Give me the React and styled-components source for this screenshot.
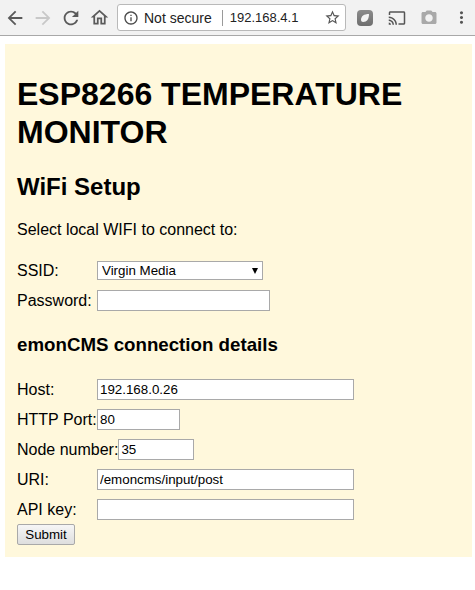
import styled, { createGlobalStyle } from 'styled-components'

const GlobalStyle = createGlobalStyle`
  html, body { margin: 0; padding: 0; background: #fff; }
  body { font-family: "Liberation Sans", Arial, sans-serif; }
`

const ICONS = {
  back: 'M20 11H7.83l5.59-5.59L12 4l-8 8 8 8 1.41-1.41L7.83 13H20v-2z',
  forward: 'M12 4l-1.41 1.41L16.17 11H4v2h12.17l-5.58 5.59L12 20l8-8z',
  reload: 'M17.65 6.35C16.2 4.9 14.21 4 12 4c-4.42 0-7.99 3.58-7.99 8s3.57 8 7.99 8c3.73 0 6.84-2.55 7.73-6h-2.08c-.82 2.33-3.04 4-5.65 4-3.31 0-6-2.69-6-6s2.69-6 6-6c1.66 0 3.14.69 4.22 1.78L13 11h7V4l-2.35 2.35z',
  home: 'M12 5.69l5 4.5V18h-2v-6H9v6H7v-7.81l5-4.5M12 3L2 12h3v8h6v-6h2v6h6v-8h3L12 3z',
  info: 'M11 7h2v2h-2zm0 4h2v6h-2zm1-9C6.48 2 2 6.48 2 12s4.48 10 10 10 10-4.48 10-10S17.52 2 12 2zm0 18c-4.41 0-8-3.59-8-8s3.59-8 8-8 8 3.59 8 8-3.59 8-8 8z',
  star: 'M22 9.24l-7.19-.62L12 2 9.19 8.63 2 9.24l5.46 4.73L5.82 21 12 17.27 18.18 21l-1.63-7.03L22 9.24zM12 15.4l-3.76 2.27 1-4.28-3.32-2.88 4.38-.38L12 6.1l1.71 4.04 4.38.38-3.32 2.88 1 4.28L12 15.4z',
  cast: 'M21 3H3c-1.1 0-2 .9-2 2v3h2V5h18v14h-7v2h7c1.1 0 2-.9 2-2V5c0-1.1-.9-2-2-2zM1 18v3h3c0-1.66-1.34-3-3-3zm0-4v2c2.76 0 5 2.24 5 5h2c0-3.87-3.13-7-7-7zm0-4v2c4.97 0 9 4.03 9 9h2c0-6.08-4.93-11-11-11z',
  camera: 'M9 2L7.17 4H4c-1.1 0-2 .9-2 2v12c0 1.1.9 2 2 2h16c1.1 0 2-.9 2-2V6c0-1.1-.9-2-2-2h-3.17L15 2H9zm3 15c-2.76 0-5-2.24-5-5s2.24-5 5-5 5 2.24 5 5-2.24 5-5 5z',
  dots: 'M12 8c1.1 0 2-.9 2-2s-.9-2-2-2-2 .9-2 2 .9 2 2 2zm0 2c-1.1 0-2 .9-2 2s.9 2 2 2 2-.9 2-2-.9-2-2-2zm0 6c-1.1 0-2 .9-2 2s.9 2 2 2 2-.9 2-2-.9-2-2-2z'
}

function Icon ({ name, size = 22, color = '#5a5a5a' }) {
  return (
    <svg width={size} height={size} viewBox='0 0 24 24' fill={color}>
      <path d={ICONS[name]} />
    </svg>
  )
}

export default function App () {
  return (
    <>
      <GlobalStyle />
      <Toolbar>
        <NavButtons>
          <IconSlot><Icon name='back' /></IconSlot>
          <IconSlot><Icon name='forward' color='#c8c8c8' /></IconSlot>
          <IconSlot><Icon name='reload' /></IconSlot>
          <IconSlot><Icon name='home' size={21} /></IconSlot>
        </NavButtons>
        <Omnibox>
          <Icon name='info' size={16} color='#4a4a4a' />
          <SecurityText>Not secure</SecurityText>
          <Divider />
          <Address>192.168.4.1</Address>
          <Icon name='star' size={17} color='#555' />
        </Omnibox>
        <ExtButtons>
          <ExtSlot>
            <ExtBadge>
              <svg width='10' height='10' viewBox='0 0 10 10'>
                <path d='M1 7C1 3 4 1 9 1 9 6 7 9 3 9 2 9 1 8 1 7z' fill='#f4f4f4' />
              </svg>
            </ExtBadge>
          </ExtSlot>
          <ExtSlot><Icon name='cast' size={18} color='#555' /></ExtSlot>
          <ExtSlot><Icon name='camera' size={18} color='#a9a9a9' /></ExtSlot>
          <ExtSlot><Icon name='dots' size={19} color='#555' /></ExtSlot>
        </ExtButtons>
      </Toolbar>

      <Page>
        <Panel>
          <Title>ESP8266 TEMPERATURE MONITOR</Title>
          <SubTitle>WiFi Setup</SubTitle>
          <Intro>Select local WIFI to connect to:</Intro>

          <Form onSubmit={e => e.preventDefault()}>
            <Row $first>
              <Label>SSID:</Label>
              <SelectWrap>
                <Select defaultValue='Virgin Media'>
                  <option>Virgin Media</option>
                </Select>
              </SelectWrap>
            </Row>
            <Row>
              <Label>Password:</Label>
              <Input type='password' $width={173} />
            </Row>

            <Section>emonCMS connection details</Section>

            <Row>
              <Label>Host:</Label>
              <Input defaultValue='192.168.0.26' $width={257} />
            </Row>
            <Row>
              <Label>HTTP Port:</Label>
              <Input defaultValue='80' $width={83} />
            </Row>
            <Row>
              <Label>Node number:</Label>
              <Input defaultValue='35' $width={76} />
            </Row>
            <Row>
              <Label>URI:</Label>
              <Input defaultValue='/emoncms/input/post' $width={257} />
            </Row>
            <Row>
              <Label>API key:</Label>
              <Input $width={257} />
            </Row>
            <SubmitButton type='submit'>Submit</SubmitButton>
          </Form>
        </Panel>
      </Page>
    </>
  )
}

const Toolbar = styled.div`
  display: flex;
  align-items: center;
  height: 35px;
  overflow: hidden;
  background: #f2f2f2;
  border-bottom: 1px solid #a8a8a8;
`

const NavButtons = styled.div`
  display: flex;
  flex-shrink: 0;
  align-items: center;
  box-sizing: border-box;
  width: 117px;
  padding-left: 1px;
`

const IconSlot = styled.div`
  display: flex;
  align-items: center;
  justify-content: center;
  width: 28px;
  height: 28px;
`

const Omnibox = styled.div`
  display: flex;
  flex-shrink: 0;
  align-items: center;
  box-sizing: border-box;
  width: 229px;
  height: 27px;
  padding: 0 4px 0 5px;
  background: #fff;
  border: 1px solid #b9b9b9;
  border-radius: 3px;
  font-size: 14px;
  color: #222;
`

const SecurityText = styled.span`
  margin-left: 5px;
`

const Divider = styled.span`
  width: 1px;
  height: 16px;
  margin: 0 7px 0 10px;
  background: #9a9a9a;
`

const Address = styled.span`
  flex: 1;
  font-size: 13px;
`

const ExtButtons = styled.div`
  display: flex;
  flex-shrink: 0;
  align-items: center;
  margin-left: 3px;
`

const ExtSlot = styled.div`
  display: flex;
  align-items: center;
  justify-content: center;
  width: 32px;
  height: 28px;
`

const ExtBadge = styled.div`
  display: flex;
  align-items: center;
  justify-content: center;
  width: 16px;
  height: 16px;
  background: linear-gradient(#8c8c8c, #6e6e6e);
  border-radius: 4px;
`

const Page = styled.div`
  padding: 8px 3px 33px 5px;
`

const Panel = styled.div`
  padding: 1px 12px 12px;
  background: #fff8dc;
  color: #000;
  font-size: 16px;
`

const Title = styled.h1`
  margin: 30px 0 22px;
  font-size: 32px;
  line-height: 38px;
  font-weight: bold;
`

const SubTitle = styled.h2`
  margin: 0 0 20px;
  font-size: 24px;
  line-height: 28px;
  font-weight: bold;
`

const Intro = styled.p`
  margin: 0 0 21px;
  line-height: 18px;
`

const Form = styled.form`
  margin: 0;
`

const Row = styled.div`
  display: flex;
  align-items: center;
  height: 21px;
  margin-top: ${p => (p.$first ? '0' : '9px')};
`

const Label = styled.label`
  min-width: 80px;
  line-height: 18px;
`

const Input = styled.input`
  box-sizing: border-box;
  width: ${p => p.$width}px;
  height: 21px;
  padding: 1px 2px;
  background: #fff;
  border: 1px solid #a9a9a9;
  border-radius: 0;
  font-family: "Liberation Sans", Arial, sans-serif;
  font-size: 13.33px;
  color: #000;
  outline: none;
`

const SelectWrap = styled.div`
  position: relative;
  display: flex;

  &::after {
    content: '';
    position: absolute;
    top: 7px;
    right: 5px;
    border-style: solid;
    border-width: 6px 3.5px 0;
    border-color: #000 transparent transparent;
    pointer-events: none;
  }
`

const Select = styled.select`
  appearance: none;
  box-sizing: border-box;
  width: 166px;
  height: 19px;
  padding: 0 0 0 4px;
  background: #fff;
  border: 1px solid #a9a9a9;
  border-radius: 0;
  font-family: "Liberation Sans", Arial, sans-serif;
  font-size: 13.33px;
  color: #000;
`

const Section = styled.h3`
  margin: 23px 0 24px;
  font-size: 18.72px;
  line-height: 21px;
  font-weight: bold;
`

const SubmitButton = styled.button`
  display: block;
  box-sizing: border-box;
  width: 58px;
  height: 21px;
  margin-top: 4px;
  padding: 0;
  background: linear-gradient(#f6f6f6, #dedede);
  border: 1px solid #a9a9a9;
  border-radius: 2px;
  font-family: "Liberation Sans", Arial, sans-serif;
  font-size: 13.33px;
  color: #000;
`
